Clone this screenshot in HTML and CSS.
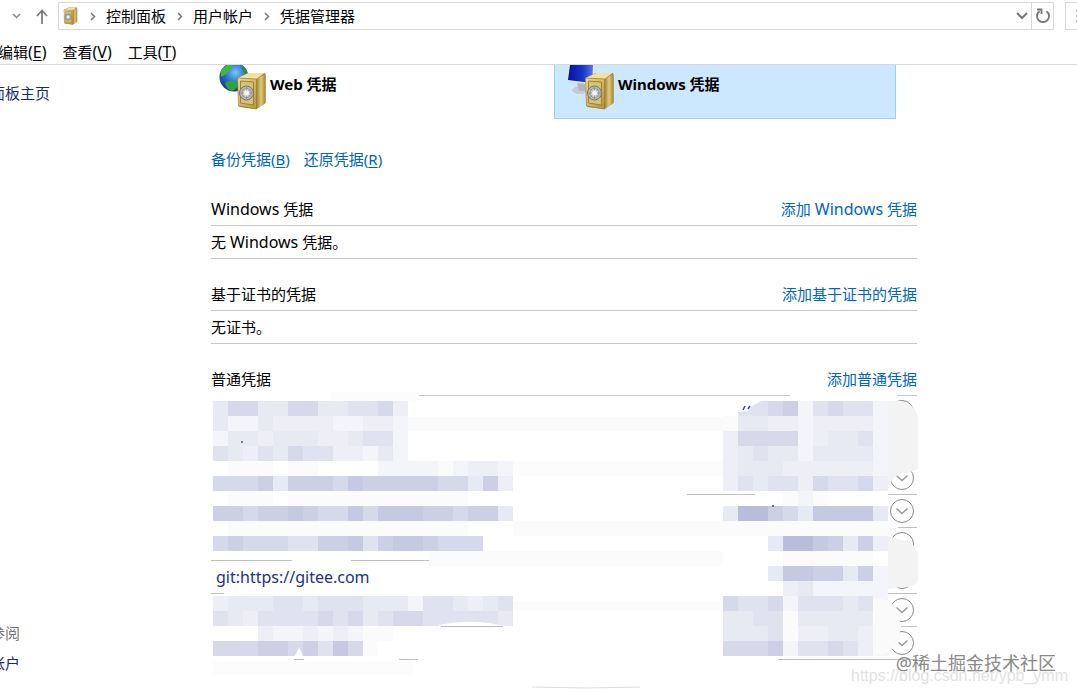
FILE: index.html
```html
<!DOCTYPE html>
<html lang="zh-cn">
<head>
    <meta charset="UTF-8">
    <meta name="viewport" content="width=device-width, initial-scale=1.0">
    <title>凭据管理器</title>
    <link rel="stylesheet" href="styles.css">
</head>
<body>
    <svg width="0" height="0" class="defs">
        <defs>
            <linearGradient id="gold" x1="0" y1="0" x2="1" y2="1">
                <stop offset="0" stop-color="#eedd94"/>
                <stop offset="1" stop-color="#b7943a"/>
            </linearGradient>
            <linearGradient id="gold-side" x1="0" y1="0" x2="1" y2="0">
                <stop offset="0" stop-color="#a08132"/>
                <stop offset="0.5" stop-color="#dfc97c"/>
                <stop offset="1" stop-color="#a58535"/>
            </linearGradient>
            <radialGradient id="sea" cx="0.55" cy="0.35" r="0.65">
                <stop offset="0" stop-color="#7cc8f2"/>
                <stop offset="0.5" stop-color="#2b78cf"/>
                <stop offset="1" stop-color="#123a8c"/>
            </radialGradient>
            <linearGradient id="screen" x1="0" y1="0" x2="1" y2="0">
                <stop offset="0" stop-color="#0712a0"/>
                <stop offset="0.6" stop-color="#1a35cc"/>
                <stop offset="1" stop-color="#5877e6"/>
            </linearGradient>
            <symbol id="safe" viewBox="0 0 30 38">
                <path d="M1 6 L11 1 H28 L29 2 V31 L20 37 L3 35 Z" fill="#a08030"/>
                <path d="M1 6 L12 1 H28 L20 7 Z" fill="#f1e2a0"/>
                <path d="M20 7 L29 2 V31 L20 37 Z" fill="url(#gold-side)"/>
                <path d="M1 6 L20 7 V37 L2 34 Z" fill="url(#gold)" stroke="#94742a" stroke-width="0.6"/>
                <path d="M4 9 L17 10 V33 L4 31 Z" fill="#d9c273" stroke="#8e712b" stroke-width="0.8"/>
                <circle cx="10" cy="21" r="7" fill="#b9b8b2" stroke="#77746a"/>
                <circle cx="10" cy="21" r="4.5" fill="#d8d8d6" stroke="#8b8a86" stroke-width="0.8"/>
                <path d="M10 15 V27 M4 21 H16 M6 17 L14 25 M14 17 L6 25" stroke="#888" stroke-width="0.7"/>
                <circle cx="10" cy="21" r="2.5" fill="#f3f3f3"/>
            </symbol>
        </defs>
    </svg>

    <header>
        <div class="nav">
            <button class="history" aria-label="最近浏览的位置">
                <svg width="9" height="6" viewBox="0 0 9 6"><path d="M1 1 L4.500 4.500 L8 1" fill="none" stroke="#888" stroke-width="1.500"/></svg>
            </button>
            <button class="up" aria-label="向上">
                <svg width="12" height="15" viewBox="0 0 12 15"><path d="M6 15 V2 M1 7 L6 1.500 L11 7" fill="none" stroke="#777" stroke-width="1.700"/></svg>
            </button>
            <div class="address">
                <svg class="small-safe" width="15" height="18"><use href="#safe"/></svg>
                <svg class="sep" width="6" height="9" viewBox="0 0 6 9"><path d="M1 1 L4.500 4.500 L1 8" fill="none" stroke="#777" stroke-width="1.500"/></svg>
                <a href="#">控制面板</a>
                <svg class="sep" width="6" height="9" viewBox="0 0 6 9"><path d="M1 1 L4.500 4.500 L1 8" fill="none" stroke="#777" stroke-width="1.500"/></svg>
                <a href="#">用户帐户</a>
                <svg class="sep" width="6" height="9" viewBox="0 0 6 9"><path d="M1 1 L4.500 4.500 L1 8" fill="none" stroke="#777" stroke-width="1.500"/></svg>
                <a href="#">凭据管理器</a>
                <button class="drop" aria-label="上一个位置">
                    <svg width="12" height="8" viewBox="0 0 12 8"><path d="M1 1 L6 6 L11 1" fill="none" stroke="#777" stroke-width="2"/></svg>
                </button>
                <button class="refresh" aria-label="刷新">
                    <svg width="16" height="16" viewBox="0 0 16 16"><path d="M11.500 3.200 A6 6 0 1 1 4.500 3.200" fill="none" stroke="#777" stroke-width="1.900"/><path d="M2 1.500 H6.500 V6" fill="none" stroke="#777" stroke-width="1.800"/></svg>
                </button>
            </div>
            <div class="search">
                <svg width="14" height="14" viewBox="0 0 14 14"><path d="M0 2 H6 M0 7 H6 M0 12 H6" stroke="#777"/></svg>
            </div>
        </div>
        <nav class="menu">
            <a href="#">文件<span class="en">(<u>F</u>)</span></a>
            <a href="#">编辑<span class="en">(<u>E</u>)</span></a>
            <a href="#">查看<span class="en">(<u>V</u>)</span></a>
            <a href="#">工具<span class="en">(<u>T</u>)</span></a>
        </nav>
    </header>

    <div class="page">
        <aside>
            <a href="#">控制面板主页</a>
            <div class="see-also">
                <span>另请参阅</span>
                <a href="#">用户帐户</a>
            </div>
        </aside>

        <main>
            <div class="types">
                <button class="type">
                    <svg width="63" height="46" viewBox="0 0 63 46">
                        <circle cx="27" cy="12" r="14.500" fill="url(#sea)"/>
                        <path d="M14 6 Q16 2 20 0 L25 0 Q26 3 22 5 Q21 9 17 10 Q15 13 14 11 Z" fill="#43b83c"/>
                        <path d="M18 18 Q24 14 29 17 L31 21 Q28 26 24 26 Q19 23 18 18 Z" fill="#2fa33a"/>
                        <path d="M34 0 L38 3 L41 9 L37 8 Z" fill="#2d9138"/>
                        <use href="#safe" x="29" y="7" width="31" height="38"/>
                    </svg>
                    <span>Web 凭据</span>
                </button>
                <button class="type active">
                    <svg width="63" height="46" viewBox="0 0 63 46">
                        <path d="M14 0 H40 L38 20 L12 17 Z" fill="#dfe5ee"/>
                        <path d="M15 0 H38 L37 18 L13 15 Z" fill="url(#screen)"/>
                        <ellipse cx="25" cy="25" rx="8" ry="4" fill="#c3ccd6"/>
                        <path d="M22 18 L30 19 V26 H24 Z" fill="#adb7c3"/>
                        <use href="#safe" x="29" y="7" width="31" height="38"/>
                    </svg>
                    <span>Windows 凭据</span>
                </button>
            </div>

            <div class="actions">
                <a href="#">备份凭据(<u>B</u>)</a>
                <a href="#">还原凭据(<u>R</u>)</a>
            </div>

            <section>
                <div class="head"><h2><span class="en">Windows</span> 凭据</h2><a href="#">添加 <span class="en">Windows</span> 凭据</a></div>
                <p>无 <span class="en">Windows</span> 凭据。</p>
            </section>
            <section>
                <div class="head"><h2>基于证书的凭据</h2><a href="#">添加基于证书的凭据</a></div>
                <p>无证书。</p>
            </section>
            <section>
                <div class="head"><h2>普通凭据</h2><a href="#">添加普通凭据</a></div>
                <div class="list">
                    <ul id="credentials"></ul>
                    <svg id="mosaic" width="708" height="310" viewBox="0 0 708 310"></svg>
                </div>
            </section>
        </main>
    </div>

    <div class="mark url">https://blog.csdn.net/ypb_ymm</div>
    <div class="mark site">@稀土掘金技术社区</div>
    <script src="script.js"></script>
</body>
</html>
```
FILE: styles.css
```css
* {
    box-sizing: border-box;
}
body {
    font-family: "Noto Sans", "Noto Sans CJK SC", sans-serif;
    font-size: 15px;
    line-height: 20px;
    color: #000;
    background-color: #fff;
    margin: 0;
    min-height: 100vh;
    position: relative;
    overflow: hidden;
}
a {
    color: #0066b8;
    text-decoration: none;
}
button {
    font: inherit;
    color: inherit;
    background: none;
    border: none;
    padding: 0;
}
svg {
    display: block;
    flex: none;
}
.defs {
    position: absolute;
}
/* 西文比中文大一号 */
.en {
    font-size: 16px;
    line-height: 16px;
}
header {
    height: 65px;
    border-bottom: 1px solid #d9d9d9;
    overflow: hidden;
}
.nav {
    display: flex;
    align-items: center;
    padding-top: 2px;
}
.history {
    margin-left: 12px;
}
.up {
    margin: 0 10px 0 15px;
}
.address {
    flex: 1;
    display: flex;
    align-items: center;
    height: 28px;
    border: 1px solid #d9d9d9;
    padding-left: 4px;
}
.address a {
    color: #000;
}
.sep {
    margin: 0 10px 0 11px;
}
.small-safe + .sep {
    margin-left: 12px;
}
.drop {
    margin: 0 3px 0 auto;
}
.refresh {
    height: 26px;
    width: 22px;
    padding-left: 3px;
    border-left: 1px solid #d9d9d9;
}
.search {
    width: 12px;
    height: 28px;
    margin-left: 11px;
    border: 1px solid #d9d9d9;
    border-right: none;
    padding: 6px 0 0 10px;
    overflow: hidden;
}
.menu {
    display: flex;
    gap: 16px;
    margin: 12px 0 0 -66px;
}
.menu a {
    color: #000;
    white-space: nowrap;
}
u {
    text-underline-offset: 2px;
}
.page {
    display: flex;
    min-height: calc(100vh - 65px);
}
aside {
    width: 251px;
    flex: none;
    margin-left: -40px;
    padding: 18px 0 21px;
    display: flex;
    flex-direction: column;
    justify-content: space-between;
}
aside a {
    color: #1a2b6d;
}
.see-also {
    display: flex;
    flex-direction: column;
    gap: 10px;
    color: #777;
}
main {
    flex: 1;
    max-width: 706px;
}
.types {
    display: flex;
    gap: 6px;
    margin: 0 0 30px -5px;
}
.type {
    width: 342px;
    height: 54px;
    display: flex;
    align-items: flex-start;
    font-weight: bold;
    border: 1px solid transparent;
    border-top: none;
}
.type span {
    margin-top: 9px;
}
.type.active {
    background-color: #cce8ff;
    border-color: #99d1f5;
}
.actions {
    display: flex;
    gap: 14px;
    margin-bottom: 30px;
}
section {
    margin-bottom: 25px;
}
.head {
    display: flex;
    justify-content: space-between;
    height: 27px;
    border-bottom: 1px solid #c8c8c8;
}
h2 {
    margin: 0;
    font-size: 15px;
    font-weight: normal;
}
p {
    margin: 0;
    padding: 6px 0;
    border-bottom: 1px solid #c8c8c8;
}
.list {
    position: relative;
}
#credentials {
    list-style: none;
    margin: 0;
    padding: 0;
}
#credentials li {
    display: flex;
    justify-content: space-between;
    align-items: center;
    height: 33px;
    border-bottom: 1px solid #c0c0c0;
    padding: 0 2px 0 5px;
}
#credentials a {
    font-size: 16px;
    color: #1f3282;
}
#credentials button {
    margin-left: auto;
}
#mosaic {
    position: absolute;
    left: 0;
    top: -10px;
    pointer-events: none;
}
.mark {
    position: absolute;
    white-space: nowrap;
}
.mark.site {
    right: 21px;
    bottom: 19px;
    font-size: 18px;
    line-height: 24px;
    color: #8a8a8a;
}
.mark.url {
    right: 9px;
    bottom: 8px;
    font-family: "Liberation Sans", sans-serif;
    font-size: 16px;
    color: #e2e2e2;
}
```
FILE: script.js
```javascript
var names = ['', '', '', '', '', 'git:https://gitee.com', '', ''];
var chevron = '<svg width="26" height="26" viewBox="0 0 26 26"><circle cx="13" cy="13" r="11.500" fill="#fff" stroke="#8a8a8a"/>' +
    '<path d="M7.500 10.500 L13 15.500 L18.500 10.500" fill="none" stroke="#999" stroke-width="1.500"/></svg>';

var html = '';
for (var i = 0; i < names.length; i++) {
    html += '<li>' + (names[i] ? '<a href="#">' + names[i] + '</a>' : '') +
        '<button aria-label="展开">' + chevron + '</button></li>';
}
document.getElementById('credentials').innerHTML = html;

// 马赛克：每个字母是一格颜色，'.' 为透明
var colors = {
    w: '#ffffff', a: '#fbfbfc', b: '#f4f5fa', c: '#eeeff6', d: '#e7e9f3',
    e: '#e0e3ef', f: '#d6d9e9', g: '#cdd0e5', h: '#c5c9e2', i: '#b9bcdc'
};
var left = [
    'dffddffddeefc', 'dbbdccccbbccb', 'bddcdddccdeeb', 'edcedfeeccbdb',
    'waaawaawwwwbbbbabccb', 'fffgdgggfhgggggffdgc', 'waaawaaaaaaaaaaaawww', 'ggfgghgffhfhhhggfggd',
    'waaaaaaaaaaaaaaaawww', 'fgfffeeggheghhgfff', '', '',
    '', 'cdddeedeeedddbeedcde', 'edceeeefefdeffeeeeed', 'wwwcbbcbcbaa', 'fffggfgehfa'
];
var right = [
    '.eefgbefeeb', 'addccbccccb', 'cffffbcddeb', 'cdeddbddddb',
    'cdddccccccb', 'cedeecfeefc', '...wabawwww', 'diigfdhhhhd',
    'aaaaaaaaaaa', 'wwwdiihgdgc', 'wwwwaaaaaaw', 'wwwdhhggdgb',
    'wwwwcdbbbbb', 'feefbeeedeb', 'ddeeaddddda', 'dddeaccddcc', 'fffgbeefecb'
];

function rect(x, y, w, h, color) {
    return '<rect x="' + x + '" y="' + y + '" width="' + w + '" height="' + h + '" fill="' + color + '"/>';
}

function cells(rows, startX) {
    var out = '';
    for (var r = 0; r < rows.length; r++) {
        for (var c = 0; c < rows[r].length; c++) {
            if (rows[r][c] != '.') {
                out += rect(startX + c * 15, 15 + r * 15, 15, 15, colors[rows[r][c]]);
            }
        }
    }
    return out;
}

// 先擦掉分隔线，[x, y, 宽]
var wipes = [
    [0, 9, 208], [579, 9, 107], [0, 42, 708], [0, 75, 708], [0, 108, 476], [544, 108, 132],
    [0, 141, 687], [81, 174, 59], [218, 174, 490], [13, 207, 654],
    [0, 240, 690], [0, 273, 83], [93, 273, 95], [207, 273, 360]
];
var svg = '';
for (var j = 0; j < wipes.length; j++) {
    svg += rect(wipes[j][0], wipes[j][1] - 2, wipes[j][2], 4, '#fff');
}
svg += rect(120, 5, 88, 10, '#fcfcfc');
svg += rect(197, 31, 315, 14, '#fafafb');
svg += rect(302, 75, 210, 15, '#fcfcfd');
svg += rect(302, 135, 210, 15, '#fbfbfc');
svg += rect(218, 165, 294, 15, '#fbfbfc');
svg += rect(302, 215, 210, 10, '#fcfcfd');
svg += rect(2, 275, 200, 13, '#fcfcfc');
svg += cells(left, 2) + cells(right, 512);
// 涂抹的边缘
svg += '<path d="M677 15 H690 Q703 18 707 31 V82 Q704 86 692 87 Q680 90 677 105 Z" fill="#f3f3f4"/>';
svg += '<path d="M677 150 L690 154 Q703 155 707 168 V196 Q702 202 690 201 L677 203 Z" fill="#f3f3f3"/>';
svg += '<path d="M662 212 Q680 212 689 227 V254 Q682 268 662 270 Z" fill="#fafafb"/>';
svg += '<path d="M527 13 H556 Q541 18 537 25 L527 26 Z" fill="#fff"/>';
svg += '<path d="M532 24 L534 20 M537 23 L539 20 M562 121 V119 M30 56 H32" stroke="#3a4f83" stroke-width="1.500"/>';
svg += '<path d="M228 239 Q260 232 293 240 V242 H228 Z" fill="#fff"/><path d="M230 240.500 H292" stroke="#bbb"/>';
svg += '<path d="M84 270 L88 261 L92 270 Z" fill="#fff"/>';
svg += '<path d="M321 301 Q375 303 429 301" fill="none" stroke="#ddd"/>';
document.getElementById('mosaic').innerHTML = svg;
```
